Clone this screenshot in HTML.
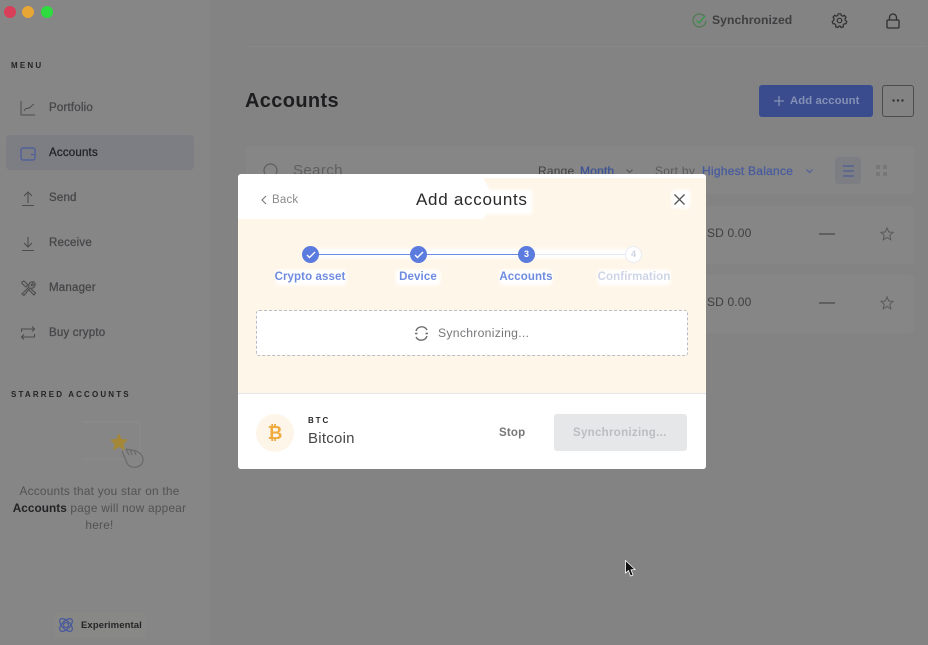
<!DOCTYPE html>
<html><head><meta charset="utf-8">
<style>
html,body{margin:0;padding:0;width:928px;height:645px;overflow:hidden;background:#828382;font-family:"Liberation Sans",sans-serif}
.a{position:absolute;white-space:nowrap}
svg{position:absolute;overflow:visible}
.nav{left:49px;font-size:11.500px;color:#47474a;letter-spacing:.2px;line-height:14px;-webkit-text-stroke:.3px currentColor}
.cap{font-size:8px;font-weight:bold;color:#242426;letter-spacing:2.200px;line-height:10px}
.step{font-size:11.500px;font-weight:bold;color:#6f8bdf;line-height:14px;transform:translateX(-50%);letter-spacing:.1px}
.w{position:absolute;background:#fff;filter:blur(1.500px)}
.c{position:absolute;background:#fff6ea}
</style></head><body>
<div class="a" style="left:0;top:0;width:210px;height:645px;background:#868686"></div>
<div class="a" style="left:210px;top:0;width:718px;height:645px;background:#828382"></div>
<div class="a" style="left:246px;top:46px;width:680px;height:1px;background:#898988"></div>

<div class="a" style="left:4px;top:6px;width:12px;height:12px;border-radius:50%;background:#d93f58"></div>
<div class="a" style="left:22px;top:6px;width:12px;height:12px;border-radius:50%;background:#e8a636"></div>
<div class="a" style="left:41px;top:6px;width:12px;height:12px;border-radius:50%;background:#2fdc3f"></div>

<div class="a cap" style="left:11px;top:61px">MENU</div>
<div class="a" style="left:6px;top:135px;width:188px;height:35px;border-radius:4px;background:#7c7e83"></div>

<svg style="left:20px;top:100px" width="16" height="16" fill="none" stroke="#4c4c4e" stroke-width="1"><path d="M1 1V15H15M4 11C6 7 7 9 9 8S11 6 14 4"/></svg>
<svg style="left:20px;top:146px" width="16" height="15" fill="none" stroke="#4a5c9e" stroke-width="1.200"><rect x="1" y="2" width="14" height="12" rx="2"/><path d="M11 8.500h3"/></svg>
<svg style="left:20px;top:190px" width="16" height="16" fill="none" stroke="#4c4c4e" stroke-width="1.100"><path d="M8 13V2M4 6L8 2L12 6M2 15.500H14"/></svg>
<svg style="left:20px;top:235px" width="16" height="16" fill="none" stroke="#4c4c4e" stroke-width="1.100"><path d="M8 2V12M4 8L8 12L12 8M2 15.500H14"/></svg>
<svg style="left:20px;top:280px" width="16" height="16" fill="none" stroke="#4c4c4e" stroke-width="1.100"><path d="M2 14L9 7C8 4 10 1 14 2L11 5L12 6L15 3.500C15.500 7 13 9 10 8L4 15.500ZM2 2L4 1L8 5L6 7L2 3.500ZM9 10L14 15L15.500 13L11 9"/></svg>
<svg style="left:20px;top:325px" width="16" height="16" fill="none" stroke="#4c4c4e" stroke-width="1.100"><path d="M1.500 7V4H14.500M12 1.500L14.500 4L12 6.500M14.500 9V12H1.500M4 9.500L1.500 12L4 14.500"/></svg>

<div class="a nav" style="top:101px">Portfolio</div>
<div class="a nav" style="top:146px;color:#222326">Accounts</div>
<div class="a nav" style="top:191px">Send</div>
<div class="a nav" style="top:236px">Receive</div>
<div class="a nav" style="top:281px">Manager</div>
<div class="a nav" style="top:326px">Buy crypto</div>

<div class="a cap" style="left:11px;top:390px;letter-spacing:2.150px">STARRED ACCOUNTS</div>
<svg style="left:80px;top:418px" width="66" height="54" fill="none">
<path d="M3 4H60V36M3 41H44" stroke="#8c8c8b"/>
<path d="M39 15L41.500 21L48 21.500L43.500 26L45 32.500L39 29L33 32.500L34.500 26L30 21.500L36.500 21Z" fill="#a48838"/>
<path d="M42 33L47 45C50 52 63 50 63 42C63 37 60 35 56 33L46 31M46 31L49 37M50 31L52 37M54 32L56 37" stroke="#6a6a6a" stroke-width="1.200"/>
</svg>
<div class="a" style="left:0;top:483px;width:199px;text-align:center;font-size:11.800px;line-height:17px;color:#525254;white-space:normal;letter-spacing:.25px;padding-top:0"><span style="position:relative;top:0">Accounts that you star on the</span><br><b style="color:#232325;letter-spacing:.05px">Accounts</b> page will now appear<br>here!</div>

<div class="a" style="left:54px;top:612px;width:92px;height:27px;background:#888887;border-radius:4px"></div>
<svg style="left:58px;top:617px" width="16" height="16" fill="none" stroke="#47589c" stroke-width="1.200"><ellipse cx="8" cy="8" rx="8" ry="4" transform="rotate(45 8 8)"/><ellipse cx="8" cy="8" rx="8" ry="4" transform="rotate(-45 8 8)"/><circle cx="8" cy="8" r="2.500"/></svg>
<div class="a" style="left:81px;top:620px;font-size:9.500px;line-height:12px;font-weight:bold;color:#252527;letter-spacing:.1px">Experimental</div>

<svg style="left:692px;top:13px" width="15" height="15" fill="none" stroke-width="1.200"><path d="M13 4A6.500 6.500 0 1 0 14 7.500" stroke="#4f7a52"/><path d="M4.500 7.500L7 10L13 3" stroke="#2a9a42"/></svg>
<div class="a" style="left:712px;top:13px;font-size:12.200px;line-height:15px;font-weight:bold;color:#3f3f41;letter-spacing:.03px">Synchronized</div>
<svg style="left:832px;top:13px" width="15" height="15" fill="none" stroke="#2f2f31" stroke-width="1.200"><circle cx="7.500" cy="7.500" r="2.300"/><path d="M6.200 .8H8.800L9.200 2.500L10.900 3.200L12.400 2.300L14 4.300L12.900 5.700L13.300 7.500L14.800 8.400L14 10.800L12.300 10.700L11.100 12.100L11.400 13.800L9 14.500L8.200 13.100H6.800L6 14.500L3.600 13.800L3.900 12.100L2.700 10.700L1 10.800L.2 8.400L1.700 7.500L2.100 5.700L1 4.300L2.600 2.300L4.100 3.200L5.800 2.500Z"/></svg>
<svg style="left:886px;top:13px" width="14" height="16" fill="none" stroke="#2f2f31" stroke-width="1.300"><rect x="1" y="7" width="12" height="8" rx="1"/><path d="M3.500 7V4.500A3.500 3.500 0 0 1 10.500 4.500V7"/></svg>

<div class="a" style="left:245px;top:89px;font-size:20px;line-height:24px;font-weight:bold;color:#1d1d1f;letter-spacing:.36px">Accounts</div>
<div class="a" style="left:759px;top:85px;width:114px;height:32px;border-radius:3px;background:#3a4c8e"></div>
<svg style="left:774px;top:96px" width="10" height="10" stroke="#8490b5" stroke-width="1.300"><path d="M5 0V10M0 5H10"/></svg>
<div class="a" style="left:790px;top:94px;font-size:11.300px;line-height:14px;font-weight:bold;color:#8490b5;letter-spacing:.1px">Add account</div>
<div class="a" style="left:882px;top:85px;width:30px;height:30px;border:1px solid #4c4c4d;border-radius:3px"></div>
<svg style="left:892px;top:99px" width="12" height="3" fill="#333"><circle cx="1.500" cy="1.500" r="1.200"/><circle cx="6" cy="1.500" r="1.200"/><circle cx="10.500" cy="1.500" r="1.200"/></svg>

<div class="a" style="left:246px;top:146px;width:668px;height:48px;background:#858685;border-radius:3px"></div>
<div class="a" style="left:246px;top:206px;width:668px;height:58px;background:#858685;border-radius:3px"></div>
<div class="a" style="left:246px;top:275px;width:668px;height:58px;background:#858685;border-radius:3px"></div>
<svg style="left:263px;top:163px" width="16" height="16" fill="none" stroke="#5f5f60" stroke-width="1.200"><circle cx="7.500" cy="7.500" r="6.500"/></svg>
<div class="a" style="left:293px;top:162px;font-size:15px;line-height:18px;color:#5f5f60;letter-spacing:.4px">Search</div>
<div class="a" style="left:538px;top:164px;font-size:12px;line-height:15px;color:#414143;letter-spacing:.2px">Range</div>
<div class="a" style="left:580px;top:164px;font-size:12px;line-height:15px;color:#3f5498;letter-spacing:.2px;-webkit-text-stroke:.3px #3f5498">Month</div>
<svg style="left:626px;top:169px" width="7" height="5" fill="none" stroke="#555"><path d="M.5 .5L3.500 3.500L6.500 .5"/></svg>
<div class="a" style="left:655px;top:164px;font-size:12px;line-height:15px;color:#5b5b5c;letter-spacing:.3px">Sort by</div>
<div class="a" style="left:702px;top:164px;font-size:12px;line-height:15px;color:#4a5c9e;letter-spacing:.25px;-webkit-text-stroke:.3px #4a5c9e">Highest Balance</div>
<svg style="left:806px;top:169px" width="7" height="5" fill="none" stroke="#4a5c9e"><path d="M.5 .5L3.500 3.500L6.500 .5"/></svg>
<div class="a" style="left:835px;top:157px;width:26px;height:27px;border-radius:3px;background:#7c7e83"></div>
<svg style="left:842px;top:165px" width="13" height="12" stroke="#3f5498" stroke-width="1.100"><path d="M1 1H12M1 6H12M1 11H12"/></svg>
<svg style="left:876px;top:165px" width="11" height="11" fill="#767776"><rect width="4" height="4"/><rect x="7" width="4" height="4"/><rect y="7" width="4" height="4"/><rect x="7" y="7" width="4" height="4"/></svg>

<div class="a" style="left:707px;top:226px;font-size:12px;line-height:15px;color:#3f3f41;letter-spacing:.15px">SD 0.00</div>
<div class="a" style="left:707px;top:295px;font-size:12px;line-height:15px;color:#3f3f41;letter-spacing:.15px">SD 0.00</div>
<div class="a" style="left:819px;top:233px;width:16px;height:1.500px;background:#5f5f5f"></div>
<div class="a" style="left:819px;top:302px;width:16px;height:1.500px;background:#5f5f5f"></div>
<svg style="left:880px;top:227px" width="14" height="14" fill="none" stroke="#5a5a5a"><path d="M7 1L8.800 5L13 5.400L9.800 8.300L10.800 12.800L7 10.500L3.200 12.800L4.200 8.300L1 5.400L5.200 5Z"/></svg>
<svg style="left:880px;top:296px" width="14" height="14" fill="none" stroke="#5a5a5a"><path d="M7 1L8.800 5L13 5.400L9.800 8.300L10.800 12.800L7 10.500L3.200 12.800L4.200 8.300L1 5.400L5.200 5Z"/></svg>

<!-- modal -->
<div class="a" style="left:238px;top:174px;width:468px;height:295px;background:#fff;border-radius:3px;overflow:hidden">
  <div class="c" style="left:0;top:45px;width:468px;height:174px"></div>
  <div class="c" style="left:0;top:46px;width:468px;height:1px"></div>
  <div class="c" style="left:245px;top:4px;width:223px;height:42px;clip-path:polygon(0 0,100% 0,100% 100%,0 100%,12px 50%)"></div>
  <div class="w" style="left:172px;top:16px;width:122px;height:24px"></div>
  <div class="w" style="left:434px;top:16px;width:18px;height:18px"></div>
  <div class="w" style="left:0;top:220px;width:468px;height:75px;filter:none"></div>
  <div class="a" style="left:0;top:219px;width:468px;height:1px;background:#e4e6ea"></div>
  <div class="w" style="left:75px;top:75px;width:320px;height:9px"></div>
  <div class="w" style="left:38px;top:96px;width:70px;height:15px"></div>
  <div class="w" style="left:158px;top:96px;width:44px;height:15px"></div>
  <div class="w" style="left:262px;top:96px;width:52px;height:15px"></div>
  <div class="w" style="left:360px;top:96px;width:72px;height:15px"></div>
  <div class="w" style="left:18px;top:137px;width:432px;height:44px;filter:none;border-radius:3px"></div>
</div>
<svg style="left:261px;top:195px" width="6" height="10" fill="none" stroke="#77777a" stroke-width="1.100"><path d="M5 1L1 5L5 9"/></svg>
<div class="a" style="left:272px;top:193px;font-size:11.500px;line-height:14px;color:#8a8a8c;letter-spacing:.2px">Back</div>
<div class="a" style="left:416px;top:190px;font-size:17px;line-height:20px;color:#29292b;letter-spacing:.72px">Add accounts</div>
<svg style="left:674px;top:194px" width="11" height="11" stroke="#555557" stroke-width="1.300"><path d="M.5 .5L10.500 10.500M10.500 .5L.5 10.500"/></svg>

<div class="a" style="left:310px;top:254px;width:216px;height:1px;background:#6f8bdf"></div>
<div class="a" style="left:526px;top:254px;width:108px;height:1px;background:#e4e9f5"></div>
<div class="a" style="left:302px;top:246px;width:17px;height:17px;border-radius:50%;background:#5b7bde"></div>
<div class="a" style="left:410px;top:246px;width:17px;height:17px;border-radius:50%;background:#5b7bde"></div>
<svg style="left:306px;top:251px" width="10" height="8" fill="none" stroke="#fff" stroke-width="1.400"><path d="M1 4L3.500 6.500L9 1"/></svg>
<svg style="left:414px;top:251px" width="10" height="8" fill="none" stroke="#fff" stroke-width="1.400"><path d="M1 4L3.500 6.500L9 1"/></svg>
<div class="a" style="left:518px;top:246px;width:17px;height:17px;border-radius:50%;background:#5b7bde;color:#fff;font-size:9px;font-weight:bold;line-height:17px;text-align:center">3</div>
<div class="a" style="left:625px;top:246px;width:15px;height:15px;border-radius:50%;background:#fff;border:1px solid #e9ecf3;color:#ccd2e0;font-size:9px;font-weight:bold;line-height:15px;text-align:center">4</div>
<div class="a step" style="left:310px;top:270px">Crypto asset</div>
<div class="a step" style="left:418px;top:270px">Device</div>
<div class="a step" style="left:526px;top:270px">Accounts</div>
<div class="a step" style="left:634px;top:270px;color:#ced5e6">Confirmation</div>

<div class="a" style="left:256px;top:310px;width:430px;height:44px;border:1px dashed #b9bcc4;border-radius:3px"></div>
<svg style="left:414px;top:326px" width="15" height="15" fill="none" stroke="#6e6e70" stroke-width="1.400"><path d="M2 5A6 6 0 0 1 13 4M13 10A6 6 0 0 1 2 11M1 7.500H3.500M11.500 7.500H14"/></svg>
<div class="a" style="left:438px;top:326px;font-size:12.200px;line-height:15px;color:#77777a;letter-spacing:.28px">Synchronizing...</div>

<div class="a" style="left:256px;top:414px;width:38px;height:38px;border-radius:50%;background:#fdf5e8"></div>
<div class="a" style="left:265px;top:420px;width:20px;font-size:18px;line-height:26px;font-weight:bold;color:#efa93c;text-align:center">₿</div>
<div class="a" style="left:308px;top:416px;font-size:8px;line-height:10px;font-weight:bold;color:#29292b;letter-spacing:1.900px">BTC</div>
<div class="a" style="left:308px;top:430px;font-size:15px;line-height:17px;color:#47474a;letter-spacing:.25px">Bitcoin</div>
<div class="a" style="left:499px;top:426px;font-size:11.500px;line-height:14px;font-weight:bold;color:#77777a;letter-spacing:.2px">Stop</div>
<div class="a" style="left:554px;top:414px;width:133px;height:37px;border-radius:3px;background:#e6e7e9"></div>
<div class="a" style="left:573px;top:426px;font-size:11.500px;line-height:14px;font-weight:bold;color:#bcbdc1;letter-spacing:.3px">Synchronizing...</div>

<svg style="left:625px;top:560px" width="11" height="18" stroke="#fff" stroke-width=".8"><path d="M.5 .5V13L3.500 10.500L5.500 16L8 15L6 9.800L10 9.500Z" fill="#111"/></svg>
</body></html>
